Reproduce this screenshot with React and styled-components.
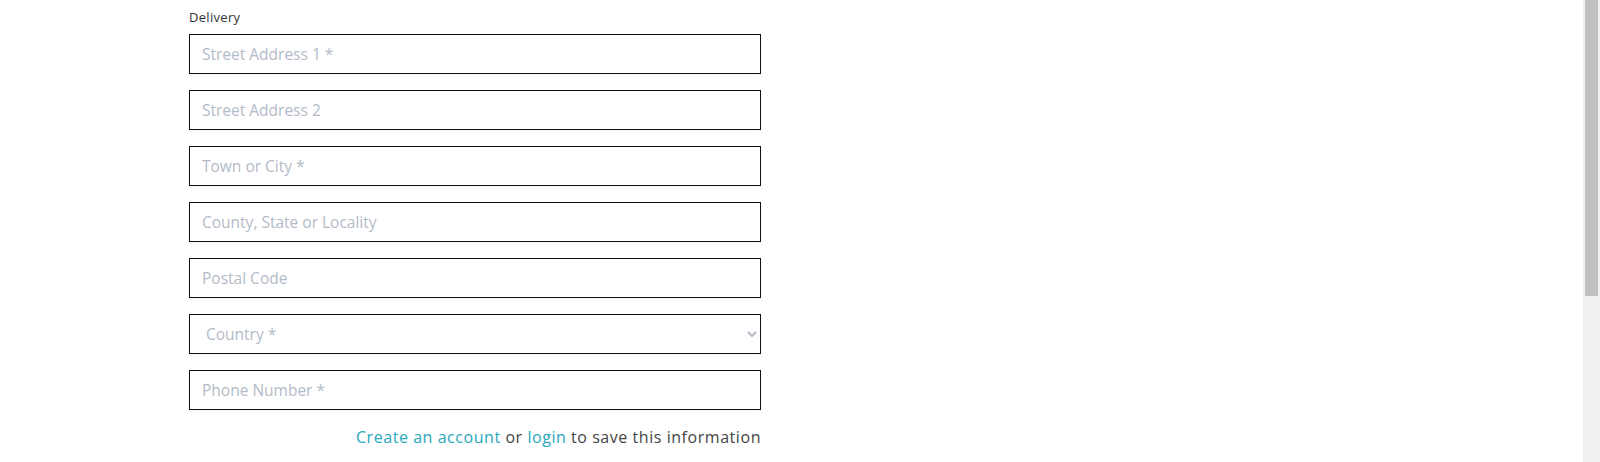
import React from 'react';
import styled, { createGlobalStyle } from 'styled-components';

const GlobalStyle = createGlobalStyle`
  html, body {
    margin: 0;
    padding: 0;
    background: #fff;
    font-family: "Open Sans", "Liberation Sans", sans-serif;
    overflow: hidden;
  }
`;

const Page = styled.div`
  display: flex;
  height: 462px;
  width: 1600px;
`;

const Main = styled.main`
  flex: 1;
  padding: 8px 0 0 189px;
`;

const Form = styled.form`
  width: 572px;
  display: flex;
  flex-direction: column;
`;

const Label = styled.div`
  font-size: 13px;
  letter-spacing: 0.3px;
  color: #333;
  height: 18px;
  line-height: 18px;
  margin-bottom: 8px;
`;

const Fields = styled.div`
  display: flex;
  flex-direction: column;
  gap: 16px;
`;

const Input = styled.input`
  box-sizing: border-box;
  height: 40px;
  width: 100%;
  border: 1px solid #111;
  border-radius: 0;
  padding: 0 12px;
  font-family: inherit;
  font-size: 15.5px;
  color: #333;
  background: #fff;
  box-shadow: 0 2px 3px rgba(0, 0, 0, 0.04);
  outline: none;

  &::placeholder {
    color: #b3bbc8;
  }
`;

const Select = styled.select`
  box-sizing: border-box;
  height: 40px;
  width: 100%;
  border: 1px solid #111;
  border-radius: 0;
  padding: 0 12px;
  font-family: inherit;
  font-size: 15.5px;
  color: #b3bbc8;
  background: #fff;
  box-shadow: 0 2px 3px rgba(0, 0, 0, 0.04);
  outline: none;
`;

const Note = styled.p`
  margin: 16px 0 0;
  text-align: right;
  font-size: 16px;
  letter-spacing: 0.55px;
  color: #444;
`;

const Link = styled.a`
  color: #29a8bd;
  text-decoration: none;
`;

const ScrollTrack = styled.div`
  width: 17px;
  background: #f1f1f1;
  display: flex;
  justify-content: center;
`;

const Thumb = styled.div`
  width: 13px;
  height: 296px;
  background: #c1c1c1;
`;

export default function App() {
  return (
    <>
      <GlobalStyle />
      <Page>
        <Main>
          <Form>
            <Label>Delivery</Label>
            <Fields>
              <Input placeholder="Street Address 1 *" />
              <Input placeholder="Street Address 2" />
              <Input placeholder="Town or City *" />
              <Input placeholder="County, State or Locality" />
              <Input placeholder="Postal Code" />
              <Select defaultValue="">
                <option value="" disabled>Country *</option>
                <option value="gb">United Kingdom</option>
              </Select>
              <Input placeholder="Phone Number *" />
            </Fields>
            <Note>
              <Link href="#">Create an account</Link> or <Link href="#">login</Link> to save this information
            </Note>
          </Form>
        </Main>
        <ScrollTrack>
          <Thumb />
        </ScrollTrack>
      </Page>
    </>
  );
}
